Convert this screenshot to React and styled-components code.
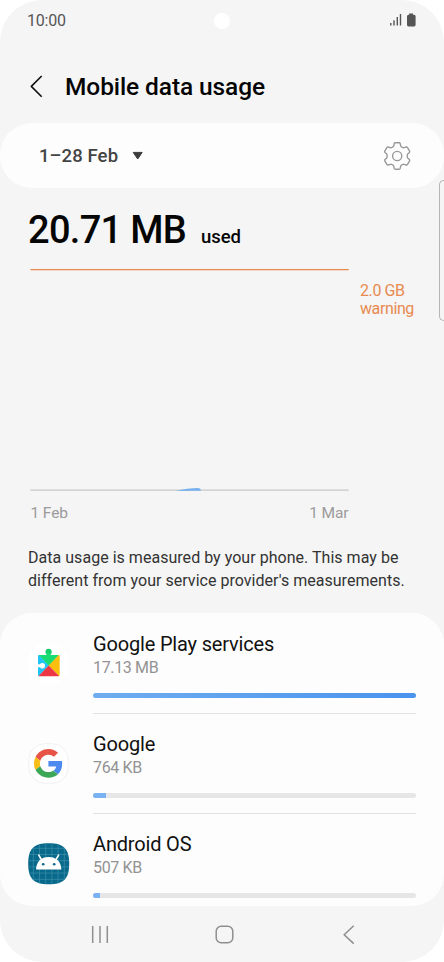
import styled, { createGlobalStyle } from 'styled-components';

const apps = [
  { name: 'Google Play services', usage: '17.13 MB', percent: 100, Icon: PlayServicesIcon },
  { name: 'Google', usage: '764 KB', percent: 4, Icon: GoogleIcon },
  { name: 'Android OS', usage: '507 KB', percent: 2.1, Icon: AndroidIcon },
];

const App = () => {
  return (
    <>
      <GlobalStyle />
      <Phone>
        <Camera />
        <EdgeHandle />
        <StatusBar>
          <Clock>10:00</Clock>
          <StatusIcons />
        </StatusBar>
        <Header>
          <BackIcon />
          <Title>Mobile data usage</Title>
        </Header>
        <FilterCard>
          <Period>1–28 Feb</Period>
          <ArrowDown />
          <GearIcon />
        </FilterCard>
        <Total>
          <Amount>20.71 MB</Amount>
          <Used>used</Used>
        </Total>
        <Chart>
          <Plot>
            <svg width='319' height='222' viewBox='0 0 319 222'>
              <path d='M.5 .5H318.7' stroke='#e88a50' strokeWidth='1.4' />
              <path d='M.5 221.1H318.7' stroke='#c6c8c8' strokeWidth='1.4' />
              <path
                d='M146 222C153 219.9 161 219 168 218.9Q170.6 219 170.6 220.3V221.8Z'
                fill='#78b2ee'
              />
            </svg>
            <Axis>
              <span>1 Feb</span>
              <span>1 Mar</span>
            </Axis>
          </Plot>
          <Warning>
            2.0 GB
            <br />
            warning
          </Warning>
        </Chart>
        <Note>
          <div>Data usage is measured by your phone. This may be</div>
          <div>different from your service provider's measurements.</div>
        </Note>
        <AppList>
          {apps.map(({ name, usage, percent, Icon }) => (
            <AppRow key={name}>
              <Icon />
              <AppInfo>
                <AppName>{name}</AppName>
                <AppUsage>{usage}</AppUsage>
                <Track>
                  <Fill $full={percent === 100} style={{ width: `${percent}%` }} />
                </Track>
              </AppInfo>
            </AppRow>
          ))}
        </AppList>
        <NavBar>
          <svg width='20' height='20' viewBox='0 0 20 20'>
            <path d='M1.7 1V18M9 1V18M16.3 1V18' stroke='#8f8f8f' strokeWidth='1.5' />
          </svg>
          <svg width='20' height='20' viewBox='0 0 20 20'>
            <rect x='1.2' y='1.2' width='16.6' height='16.6' rx='5' fill='none' stroke='#8f8f8f' strokeWidth='1.5' />
          </svg>
          <svg width='20' height='20' viewBox='0 0 20 20'>
            <path d='M14.7 .8L5.2 9.7L14.7 18.6' fill='none' stroke='#8f8f8f' strokeWidth='1.5' />
          </svg>
        </NavBar>
      </Phone>
    </>
  );
};

export default App;

function StatusIcons() {
  return (
    <svg width='28' height='16' viewBox='0 0 28 16'>
      <g fill='#555' transform='translate(.8 0)'>
        <rect x='.3' y='11' width='1.4' height='2.5' />
        <rect x='3.5' y='8.3' width='1.4' height='5.2' />
        <rect x='6.8' y='5' width='1.4' height='8.5' />
        <rect x='10' y='2' width='1.4' height='11.5' />
        <path d='M19.3 1.6H23.2V2.8H24.3Q25.8 2.8 25.8 4.3V12.8Q25.8 14.4 24.3 14.4H18.7Q17.2 14.4 17.2 12.8V4.3Q17.2 2.8 18.7 2.8H19.3Z' />
      </g>
    </svg>
  );
}

function BackIcon() {
  return (
    <svg width='14' height='24' viewBox='0 0 14 24'>
      <path d='M11.7 1L1.3 11.4L11.7 21.8' fill='none' stroke='#111' strokeWidth='1.6' strokeLinejoin='round' />
    </svg>
  );
}

function ArrowDown() {
  return (
    <svg width='12' height='10' viewBox='0 0 12 10'>
      <path d='M1.2 1.4H10.2L5.7 8Z' fill='#3c3c3c' stroke='#3c3c3c' strokeLinejoin='round' />
    </svg>
  );
}

function GearIcon() {
  return (
    <svg width='30' height='30' viewBox='0 0 30 30'>
      <g fill='none' stroke='#999' strokeWidth='1.4' strokeLinejoin='round'>
        <path d='M13.2 1.8H17.2Q18 1.8 18.2 2.6L18.6 4.6Q18.8 5.4 19.5 5.8L20.7 6.5Q21.4 6.9 22.2 6.6L24.2 6Q25 5.8 25.4 6.4L27.6 10.1Q28 10.8 27.4 11.4L25.9 12.8Q25.3 13.4 25.3 14.2V15.8Q25.3 16.6 25.9 17.2L27.4 18.6Q28 19.2 27.6 19.9L25.4 23.6Q25 24.2 24.2 24L22.2 23.4Q21.4 23.1 20.7 23.5L19.5 24.2Q18.8 24.6 18.6 25.4L18.2 27.4Q18 28.2 17.2 28.2H13.2Q12.4 28.2 12.2 27.4L11.8 25.4Q11.6 24.6 10.9 24.2L9.7 23.5Q9 23.1 8.2 23.4L6.2 24Q5.4 24.2 5 23.6L2.8 19.9Q2.4 19.2 3 18.6L4.5 17.2Q5.1 16.6 5.1 15.8V14.2Q5.1 13.4 4.5 12.8L3 11.4Q2.4 10.8 2.8 10.1L5 6.4Q5.4 5.8 6.2 6L8.2 6.6Q9 6.9 9.7 6.5L10.9 5.8Q11.6 5.4 11.8 4.6L12.2 2.6Q12.4 1.8 13.2 1.8Z' />
        <circle cx='15.2' cy='15' r='4.6' />
      </g>
    </svg>
  );
}

function PlayServicesIcon() {
  return (
    <svg width='42' height='42' viewBox='0 0 42 42'>
      <rect x='.5' y='.5' width='40' height='40' rx='17' fill='#fff' />
      <g transform='translate(0 4.1)'>
        <path d='M10.6 8H31.1L20.7 18.8Z' fill='#18dc72' />
        <circle cx='20.6' cy='4.8' r='3.1' fill='#15cf6a' />
        <path d='M18.8 6H22.4V10H18.8Z' fill='#18dc72' />
        <path d='M10 9Q10 8.1 10.8 8L20.7 18.5L10.7 29Q10 28.8 10 28Z' fill='#20c4f2' />
        <path d='M30.8 8Q31.7 8.1 31.7 9V28Q31.7 28.8 31 29L20.7 18.5Z' fill='#fdc00f' />
        <path d='M10.6 28.9L20.7 18.5L31.1 28.9Q30.9 29.1 30.3 29.1H11.3Q10.7 29.1 10.6 28.9Z' fill='#ee3744' />
        <path d='M9.8 17.2H12Q12.8 16 14.3 16A2.7 2.7 0 0 1 14.3 21.4Q12.8 21.4 12 20.2H9.8Z' fill='#fff' />
      </g>
    </svg>
  );
}

function GoogleIcon() {
  return (
    <svg width='42' height='42' viewBox='0 0 42 42'>
      <rect x='.8' y='.8' width='39.4' height='39.4' rx='16' fill='#fff' stroke='#f0f0f0' />
      <g transform='translate(6 6) scale(.6)'>
        <path fill='#e75447' d='M24 9.5c3.54 0 6.71 1.22 9.21 3.6l6.85-6.85C35.9 2.38 30.47 0 24 0 14.62 0 6.51 5.38 2.56 13.22l7.98 6.19C12.43 13.72 17.74 9.5 24 9.5z' />
        <path fill='#4c8af0' d='M46.98 24.55c0-1.57-.15-3.09-.38-4.55H24v9.02h12.94c-.58 2.96-2.26 5.48-4.78 7.18l7.73 6c4.51-4.18 7.09-10.36 7.09-17.65z' />
        <path fill='#f8bd17' d='M10.53 28.59c-.48-1.45-.76-2.99-.76-4.59s.27-3.14.76-4.59l-7.98-6.19C.92 16.46 0 20.12 0 24c0 3.88.92 7.54 2.56 10.78l7.97-6.19z' />
        <path fill='#3ca757' d='M24 48c6.48 0 11.93-2.13 15.89-5.81l-7.73-6c-2.15 1.45-4.92 2.3-8.16 2.3-6.26 0-11.57-4.22-13.47-9.91l-7.98 6.19C6.51 42.62 14.62 48 24 48z' />
      </g>
    </svg>
  );
}

function AndroidIcon() {
  return (
    <svg width='42' height='42' viewBox='0 0 42 42'>
      <path d='M20.7 .3C35.7 .3 41.2 5.8 41.2 20.8S35.7 41.3 20.7 41.3S.2 35.8 .2 20.8S5.7 .3 20.7 .3Z' fill='#08698b' />
      <path
        d='M5.3 5V36.5M11.5 1.5V40.2M17.7 .5V41M23.9 .5V41M30.1 1.2V40.3M36.3 5V36.5M5 5.3H36.5M1.3 11.5H40.1M.5 17.7H41M.5 23.9H41M1.2 30.1H40.3M5 36.3H36.5'
        stroke='#3d8fab'
        strokeWidth='.7'
      />
      <path d='M8 26.6C8.4 18.6 13 14 20.7 14S33 18.6 33.4 26.6Z' fill='#fff' />
      <path d='M10.8 12.2L13.6 16.8M30.6 12.2L27.8 16.8' stroke='#fff' strokeWidth='1.6' strokeLinecap='round' />
      <circle cx='15.2' cy='21.2' r='1.3' fill='#08698b' />
      <circle cx='26.2' cy='21.2' r='1.3' fill='#08698b' />
    </svg>
  );
}

const GlobalStyle = createGlobalStyle`
  * {
    box-sizing: border-box;
  }
  body {
    margin: 0;
    background: #fff;
    font-family: Roboto, 'Liberation Sans', sans-serif;
  }
  svg {
    display: block;
    flex-shrink: 0;
  }
`;

const Phone = styled.div`
  position: relative;
  display: flex;
  flex-direction: column;
  width: 444px;
  height: 962px;
  background: #f5f5f5;
  border-radius: 42px;
  overflow: hidden;
  white-space: nowrap;
`;

const Camera = styled.div`
  position: absolute;
  left: 214px;
  top: 13px;
  width: 16px;
  height: 16px;
  border-radius: 50%;
  background: #fff;
`;

const EdgeHandle = styled.div`
  position: absolute;
  right: -1px;
  top: 180px;
  width: 6px;
  height: 141px;
  border: 1px solid #b5b5b5;
  border-right: none;
  border-radius: 5px 0 0 5px;
  z-index: 1;
`;

const StatusBar = styled.div`
  display: flex;
  align-items: center;
  justify-content: space-between;
  height: 40px;
  padding: 0 27px;
`;

const Clock = styled.span`
  font-size: 16px;
  letter-spacing: -0.2px;
  color: #555;
`;

const Header = styled.header`
  display: flex;
  align-items: center;
  gap: 21px;
  height: 83px;
  padding: 10px 30px 0;
`;

const Title = styled.h1`
  margin: 0;
  font-size: 24.5px;
  font-weight: 500;
  letter-spacing: -0.1px;
  color: #050505;
`;

const FilterCard = styled.section`
  display: flex;
  align-items: center;
  height: 65px;
  padding: 0 32px 0 39px;
  background: #fdfdfd;
  border-radius: 32px;

  > svg:last-child {
    margin-left: auto;
  }
`;

const Period = styled.span`
  margin-right: 14px;
  font-size: 18.5px;
  font-weight: 500;
  letter-spacing: 0.1px;
  color: #444;
`;

const Total = styled.div`
  display: flex;
  align-items: baseline;
  gap: 15px;
  height: 80px;
  padding: 20px 28px 0;
  color: #050505;
`;

const Amount = styled.span`
  font-size: 38px;
  font-weight: 500;
  letter-spacing: -0.7px;
`;

const Used = styled.span`
  font-size: 18.5px;
  font-weight: 500;
  letter-spacing: -0.1px;
`;

const Chart = styled.section`
  display: flex;
  gap: 11px;
  height: 278px;
  padding-left: 30px;
`;

const Plot = styled.div`
  width: 319px;
  padding-top: 1px;
`;

const Axis = styled.div`
  display: flex;
  justify-content: space-between;
  padding: 12px 0.5px 0 0.5px;
  font-size: 15.5px;
  line-height: 20px;
  letter-spacing: -0.1px;
  color: #9b9b9b;
`;

const Warning = styled.div`
  padding-top: 14px;
  font-size: 16px;
  line-height: 18px;
  letter-spacing: -0.4px;
  color: #e88a50;
`;

const Note = styled.div`
  height: 67px;
  padding-left: 28px;
  font-size: 16px;
  line-height: 23px;
  letter-spacing: 0.03px;
  color: #333;
`;

const AppList = styled.section`
  height: 293px;
  padding: 1px 0 0 28px;
  background: #fdfdfd;
  border-radius: 32px;
  overflow: hidden;
`;

const AppRow = styled.div`
  display: flex;
  align-items: center;
  gap: 23px;
  height: 100.2px;

  > svg {
    margin-top: -1px;
  }
`;

const AppInfo = styled.div`
  width: 323px;
  height: 100%;
  padding-top: 18px;

  ${AppRow}:not(:last-child) & {
    border-bottom: 1px solid #e2e2e2;
  }
`;

const AppName = styled.div`
  font-size: 20px;
  line-height: 24px;
  letter-spacing: -0.17px;
  color: #111;
`;

const AppUsage = styled.div`
  font-size: 16px;
  line-height: 24px;
  letter-spacing: -0.35px;
  color: #939393;
`;

const Track = styled.div`
  height: 5px;
  margin-top: 13px;
  background: #e6e6e6;
  border-radius: 3px;
  overflow: hidden;
`;

const Fill = styled.div`
  height: 100%;
  background: ${(props) =>
    props.$full ? 'linear-gradient(90deg, #70adf0, #4a94ee)' : '#78b2f2'};
`;

const NavBar = styled.nav`
  display: flex;
  align-items: flex-start;
  justify-content: space-between;
  padding: 19px 85px 0 91px;
`;
